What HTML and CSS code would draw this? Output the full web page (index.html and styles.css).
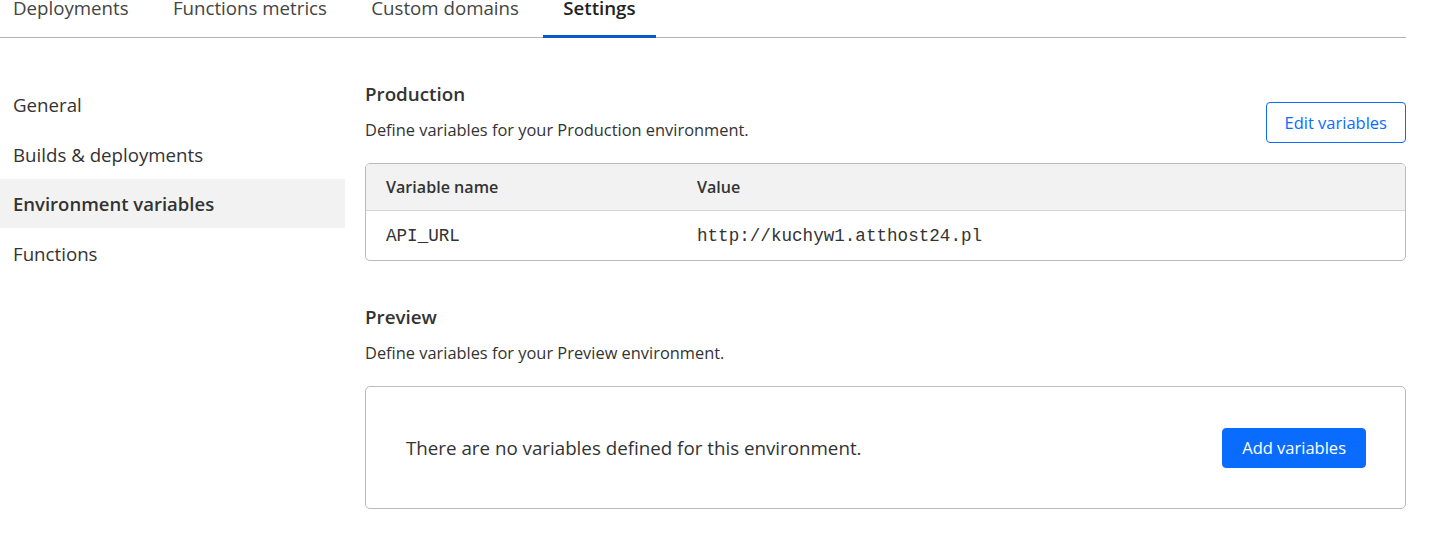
FILE: index.html
```html
<!DOCTYPE html>
<html lang="en">
<head>
<meta charset="utf-8">
<title>Settings - Environment variables</title>
<link rel="stylesheet" href="styles.css">
</head>
<body>
<div class="page">
  <nav class="tabs">
    <a class="tab">Deployments</a>
    <a class="tab">Functions metrics</a>
    <a class="tab">Custom domains</a>
    <a class="tab active">Settings</a>
  </nav>
  <div class="layout">
    <aside class="sidebar">
      <a class="side-item">General</a>
      <a class="side-item">Builds &amp; deployments</a>
      <a class="side-item active">Environment variables</a>
      <a class="side-item">Functions</a>
    </aside>
    <main class="main">
      <section class="env">
        <div class="env-head">
          <div class="env-text">
            <h2 class="env-title">Production</h2>
            <p class="env-desc">Define variables for your Production environment.</p>
          </div>
          <button class="btn btn-outline">Edit variables</button>
        </div>
        <div class="table">
          <div class="row row-head">
            <div class="cell c1">Variable name</div>
            <div class="cell c2">Value</div>
          </div>
          <div class="row">
            <div class="cell c1 mono">API_URL</div>
            <div class="cell c2 mono">http://kuchyw1.atthost24.pl</div>
          </div>
        </div>
      </section>
      <section class="env preview">
        <div class="env-head">
          <div class="env-text">
            <h2 class="env-title">Preview</h2>
            <p class="env-desc">Define variables for your Preview environment.</p>
          </div>
        </div>
        <div class="empty">
          <span class="empty-text">There are no variables defined for this environment.</span>
          <button class="btn btn-primary">Add variables</button>
        </div>
      </section>
    </main>
  </div>
</div>
</body>
</html>
```

FILE: styles.css
```css
html, body {
  margin: 0;
  padding: 0;
  background: #fff;
}
body {
  font-family: "Open Sans", "Noto Sans", sans-serif;
  color: #333;
}
.page {
  width: 1406px;
}
.tabs {
  display: flex;
  gap: 4.3px;
  height: 43px;
  box-sizing: border-box;
  margin-top: -5px;
  margin-left: -7px;
  border-bottom: 1px solid #b3b3b3;
}
.tab {
  padding: 0 20px;
  font-size: 18.7px;
  line-height: 26px;
  height: 43px;
  box-sizing: border-box;
  color: #444;
  border-bottom: 3px solid transparent;
}
.tab.active {
  color: #222;
  font-weight: 600;
  border-bottom-color: #0b57c9;
}
.layout {
  display: flex;
  margin-top: 37px;
}
.sidebar {
  width: 345px;
  flex: none;
  display: flex;
  flex-direction: column;
  padding-top: 4px;
}
.side-item {
  height: 50px;
  display: flex;
  align-items: center;
  padding-left: 13px;
  font-size: 18.7px;
  color: #333;
}
.side-item.active {
  background: #f2f2f2;
  font-weight: 600;
  height: 49px;
  font-size: 18.5px;
}
.main {
  flex: 1;
  padding-left: 20px;
  padding-top: 6px;
  min-width: 0;
}
.env-head {
  display: flex;
  justify-content: space-between;
  align-items: flex-end;
}
.env-title {
  margin: 0;
  font-size: 18.8px;
  font-weight: 600;
  line-height: 26px;
  color: #333;
}
.env-desc {
  margin: 12px 0 0;
  font-size: 16.4px;
  line-height: 22px;
  color: #333;
}
.btn {
  font-family: inherit;
  font-size: 16.5px;
  border-radius: 4px;
  cursor: pointer;
  box-sizing: border-box;
  padding: 0 19px;
}
.btn-outline {
  height: 41px;
  padding: 0 18px;
  background: #fff;
  color: #0a6cff;
  border: 1px solid #0a6cff;
  margin-bottom: -2px;
}
.btn-primary {
  height: 40px;
  background: #0a6cff;
  color: #fff;
  border: 1px solid #0a6cff;
}
.table {
  margin-top: 22px;
  border: 1px solid #bbb;
  border-radius: 5px;
  overflow: hidden;
}
.row {
  display: flex;
  height: 49px;
  align-items: center;
}
.row-head {
  background: #f2f2f2;
  border-bottom: 1px solid #d6d6d6;
  height: 46px;
  font-weight: 600;
  font-size: 16.1px;
  color: #333;
}
.cell.c1 {
  width: 311px;
  padding-left: 20px;
  flex: none;
}
.cell.c2 {
  flex: 1;
}
.mono {
  font-family: "Liberation Mono", "Courier New", monospace;
  font-size: 17.6px;
  color: #333;
}
.preview {
  margin-top: 43px;
}
.empty {
  margin-top: 22px;
  border: 1px solid #bbb;
  border-radius: 5px;
  height: 123px;
  box-sizing: border-box;
  display: flex;
  align-items: center;
  justify-content: space-between;
  padding: 0 39px 0 40px;
}
.empty-text {
  font-size: 18.75px;
  color: #333;
}
```
